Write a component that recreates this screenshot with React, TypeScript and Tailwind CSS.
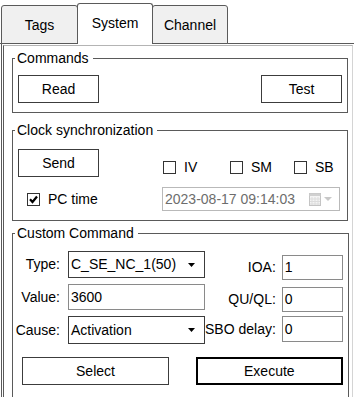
import React from 'react';

function Tab({ label, active }: { label: string; active?: boolean }) {
    return active ? (
        <div className="relative z-10 -ml-px w-[76px] h-[41px] -mb-px flex items-center justify-center bg-white border border-b-0 border-[#5a5a5a] rounded-t-[3px] pb-[2px]">
            {label}
        </div>
    ) : (
        <div className="-ml-px first:ml-[1px] w-[76px] first:w-[77px] h-[39px] -mb-px flex items-center justify-center bg-[#f0f0f0] border border-[#5a5a5a] rounded-t-[3px] pt-[1px]">
            {label}
        </div>
    );
}

function Button({ label, width, primary }: { label: string; width: string; primary?: boolean }) {
    return (
        <div className={`${width} h-[28px] flex items-center justify-center bg-white ${primary ? 'border-2 border-black' : 'border border-[#3c3c3c]'}`}>
            {label}
        </div>
    );
}

function CheckBox({ label, checked, width }: { label: string; checked?: boolean; width: string }) {
    return (
        <div className={`${width} flex items-center gap-[8px]`}>
            <span className="w-[13px] h-[13px] border border-[#333] bg-white flex items-center justify-center">
                {checked && (
                    <svg width="9" height="9" viewBox="0 0 9 9">
                        <path d="M1 4.2 L3.5 7 L8 1.5" stroke="#000" strokeWidth="2.2" fill="none" />
                    </svg>
                )}
            </span>
            <span className="leading-[16px] whitespace-nowrap">{label}</span>
        </div>
    );
}

function Combo({ value, height }: { value: string; height: string }) {
    return (
        <div className={`w-[137px] ${height} flex items-center border border-[#3c3c3c] bg-white pl-[2px]`}>
            <span className="flex-1">{value}</span>
            <svg width="7" height="4" viewBox="0 0 7 4" className="mr-[9px]">
                <path d="M0 0 H7 L3.5 4 Z" fill="#000" />
            </svg>
        </div>
    );
}

function GroupBox({ title, className, children }: { title: string; className: string; children: React.ReactNode }) {
    return (
        <fieldset className={`ml-[8px] w-[336px] border border-[#5a5a5a] ${className}`}>
            <legend className="ml-[2px] pl-[2px] pr-[4px] leading-[16px]">{title}</legend>
            {children}
        </fieldset>
    );
}

export default function App() {
    return (
        <div className="w-[354px] h-[397px] overflow-hidden bg-white text-[14px] text-black font-['Liberation_Sans',Arial,sans-serif]">

            {/* Tab headers */}
            <div className="flex items-end h-[44px] border-b border-[#5a5a5a]">
                <Tab label="Tags" />
                <Tab label="System" active />
                <Tab label="Channel" />
            </div>

            {/* Tab page */}
            <div className="ml-[1px] h-full border-l border-[#5a5a5a] pt-[1px]">
                <div className="ml-[1px] w-[350px] h-full border-l border-t border-r border-l-[#5a5a5a] border-t-[#b4b4b4] border-r-[#d4d4d4]">

                    {/* Commands */}
                    <GroupBox title="Commands" className="mt-[4px]">
                        <div className="flex justify-between px-[5px] pt-[9px] pb-[9px]">
                            <Button label="Read" width="w-[81px]" />
                            <Button label="Test" width="w-[81px]" />
                        </div>
                    </GroupBox>

                    {/* Clock synchronization */}
                    <GroupBox title="Clock synchronization" className="mt-[9px]">
                        <div className="pt-[11px] pb-[9px]">
                            <div className="flex items-start pl-[5px]">
                                <Button label="Send" width="w-[81px]" />
                                <div className="flex ml-[64px] mt-[10px]">
                                    <CheckBox label="IV" width="w-[67px]" />
                                    <CheckBox label="SM" width="w-[64px]" />
                                    <CheckBox label="SB" width="w-[40px]" />
                                </div>
                            </div>
                            <div className="flex items-center mt-[10px]">
                                <div className="ml-[14px] w-[135px]">
                                    <CheckBox label="PC time" checked width="w-[120px]" />
                                </div>
                                <div className="w-[178px] h-[24px] flex items-center border border-[#b9b9b9] bg-white pl-[2px] text-[#6d6d6d]">
                                    <span className="flex-1">2023-08-17 09:14:03</span>
                                    <svg width="12" height="13" viewBox="0 0 12 13" className="mr-[3px]">
                                        <rect x="0.5" y="0.5" width="11" height="12" fill="#f4f4f4" stroke="#c4c4c4" />
                                        <rect x="0.5" y="0.5" width="11" height="2.5" fill="#d0d0d0" />
                                        <path d="M3 4 V12 M6 4 V12 M9 4 V12 M1 6 H11 M1 8.5 H11 M1 11 H11" stroke="#dcdcdc" strokeWidth="1" />
                                    </svg>
                                    <svg width="8" height="4" viewBox="0 0 8 4" className="mr-[7px]">
                                        <path d="M0 0 H8 L4 4 Z" fill="#c8c8c8" />
                                    </svg>
                                </div>
                            </div>
                        </div>
                    </GroupBox>

                    {/* Custom Command */}
                    <GroupBox title="Custom Command" className="mt-[4px]">
                        <div className="pt-[10px] pb-[12px]">
                            <div className="flex">
                                <div className="flex flex-col">
                                    <div className="flex items-center">
                                        <span className="w-[47px] text-right">Type:</span>
                                        <div className="ml-[8px]"><Combo value="C_SE_NC_1(50)" height="h-[27px]" /></div>
                                    </div>
                                    <div className="flex items-center mt-[6px]">
                                        <span className="w-[47px] text-right">Value:</span>
                                        <div className="ml-[8px] w-[137px] h-[26px] flex items-center border border-[#8a8a8a] bg-white pl-[2px]">3600</div>
                                    </div>
                                    <div className="flex items-center mt-[6px]">
                                        <span className="w-[47px] text-right">Cause:</span>
                                        <div className="ml-[8px]"><Combo value="Activation" height="h-[28px]" /></div>
                                    </div>
                                </div>
                                <div className="flex flex-col items-end ml-auto pr-[5px] pt-[4px] whitespace-nowrap">
                                    <div className="flex items-center">
                                        <span>IOA:</span>
                                        <div className="ml-[6px] w-[61px] h-[25px] flex items-center border border-[#8a8a8a] bg-white pl-[2px]">1</div>
                                    </div>
                                    <div className="flex items-center mt-[7px]">
                                        <span>QU/QL:</span>
                                        <div className="ml-[6px] w-[61px] h-[25px] flex items-center border border-[#8a8a8a] bg-white pl-[2px]">0</div>
                                    </div>
                                    <div className="flex items-center mt-[4px]">
                                        <span>SBO delay:</span>
                                        <div className="ml-[6px] w-[61px] h-[26px] flex items-center border border-[#8a8a8a] bg-white pl-[2px]">0</div>
                                    </div>
                                </div>
                            </div>
                            <div className="flex justify-between pl-[9px] pr-[5px] mt-[13px]">
                                <Button label="Select" width="w-[147px]" />
                                <Button label="Execute" width="w-[147px]" primary />
                            </div>
                        </div>
                    </GroupBox>
                </div>
            </div>
        </div>
    );
}
